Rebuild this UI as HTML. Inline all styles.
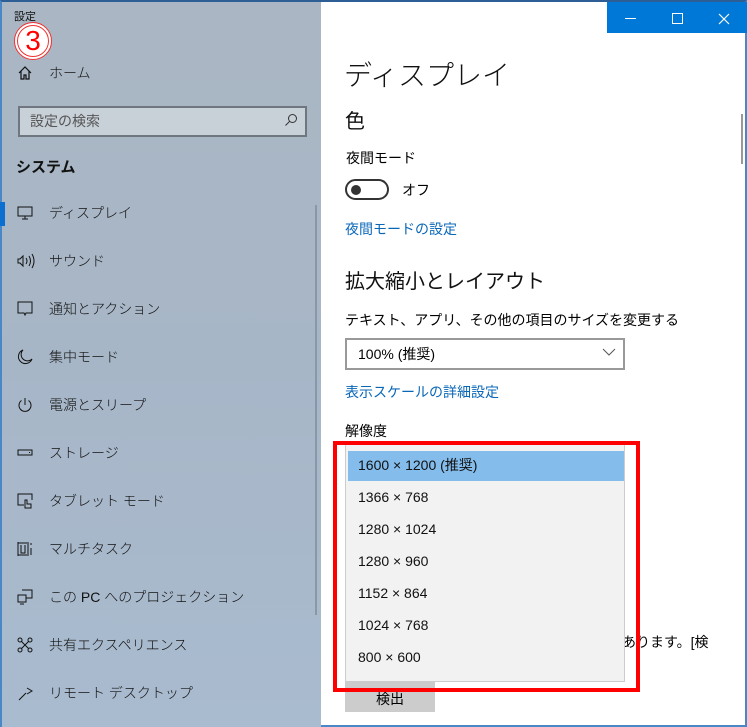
<!DOCTYPE html>
<html><head><meta charset="utf-8"><style>
*{margin:0;padding:0;box-sizing:border-box}
body{width:747px;height:727px;overflow:hidden;position:relative;font-family:"Liberation Sans","Noto Sans CJK JP",sans-serif;color:#000;background:#fff}
.abs{position:absolute;white-space:nowrap}
#side{position:absolute;left:0;top:0;width:321px;height:727px;background:linear-gradient(180deg,#aab6c3 0%,#a7b6c7 50%,#a9bbcf 100%);border-left:2px solid #4a87c7;border-top:2px solid #2d5f96}
#main{position:absolute;left:321px;top:0;width:426px;height:727px;background:#fff;border-top:2px solid #2d5f96;border-right:2px solid #4a87c7;border-bottom:2px solid #4a87c7}
.item{position:absolute;left:47px;font-size:14px;color:#111;line-height:20px;font-weight:300}
.ic{position:absolute;left:15px}
.lnk{color:#0a67b8;font-size:14px}
.opt{position:absolute;left:12px;font-size:14px;line-height:20px;color:#111}
</style></head><body>
<div id="side">
<div class="abs" style="left:12px;top:6px;font-size:11px;color:#111">設定</div>
<div class="abs" style="left:12px;top:20px;width:38px;height:38px;border-radius:50%;background:#fff;border:1px solid #e33"></div>
<div class="abs" style="left:15px;top:23px;width:32px;height:32px;border-radius:50%;border:1px solid #e33;color:#f00;font-size:28px;line-height:30px;text-align:center">3</div>
<svg class="abs" style="left:16px;top:64px" width="14" height="14" viewBox="0 0 14 14"><path d="M1 7L7 1l6 6M3 5v8h3V9h2v4h3V5" fill="none" stroke="#111" stroke-width="1.2"/></svg>
<div class="item" style="top:61px">ホーム</div>
<div class="abs" style="left:16px;top:104px;width:289px;height:31px;border:2px solid #6f7680;background:#c8d0d8"></div>
<div class="abs" style="left:28px;top:109px;font-size:14px;color:#555">設定の検索</div>
<svg class="abs" style="left:282px;top:111px" width="14" height="14" viewBox="0 0 14 14"><circle cx="8.5" cy="5.5" r="4" fill="none" stroke="#333"/><path d="M5.5 8.5L1.5 12.5" stroke="#333"/></svg>
<div class="abs" style="left:14px;top:154px;font-size:15px;font-weight:bold;color:#111">システム</div>
<div class="abs" style="left:-2px;top:200px;width:5px;height:24px;background:#0a6fd0"></div>
<svg class="ic" style="top:204px" width="16" height="14" viewBox="0 0 16 14"><rect x="1" y="1" width="14" height="9" fill="none" stroke="#111"/><path d="M8 10v3M5 13h6" stroke="#111"/></svg>
<div class="item" style="top:201px">ディスプレイ</div>
<svg class="ic" style="top:251px" width="18" height="16" viewBox="0 0 18 16"><path d="M1 6h2l3-3v10l-3-3H1z" fill="none" stroke="#111"/><path d="M9 5q2 3 0 6M12 3q3 5 0 10M15 1q4 7 0 14" fill="none" stroke="#111"/></svg>
<div class="item" style="top:249px">サウンド</div>
<svg class="ic" style="top:299px" width="16" height="16" viewBox="0 0 16 16"><path d="M1 1h14v11H9l-1 2-1-2H1z" fill="none" stroke="#111"/></svg>
<div class="item" style="top:297px">通知とアクション</div>
<svg class="ic" style="top:347px" width="16" height="16" viewBox="0 0 16 16"><path d="M6 1a7 7 0 1 0 9 9A6 6 0 0 1 6 1z" fill="none" stroke="#111"/></svg>
<div class="item" style="top:345px">集中モード</div>
<svg class="ic" style="top:395px" width="16" height="16" viewBox="0 0 16 16"><path d="M4.5 3.5a6 6 0 1 0 7 0M8 1v7" fill="none" stroke="#111"/></svg>
<div class="item" style="top:393px">電源とスリープ</div>
<svg class="ic" style="top:446px" width="16" height="10" viewBox="0 0 16 10"><rect x="1" y="2" width="14" height="5" fill="none" stroke="#111"/><path d="M12 4.5h1" stroke="#111"/></svg>
<div class="item" style="top:441px">ストレージ</div>
<svg class="ic" style="top:491px" width="16" height="16" viewBox="0 0 16 16"><path d="M7 12H1V1h14v6M8 15V7l2 0v4h4v4z" fill="none" stroke="#111"/></svg>
<div class="item" style="top:489px">タブレット モード</div>
<svg class="ic" style="top:539px" width="16" height="16" viewBox="0 0 16 16"><path d="M1 1v14M1 2h9M1 14h9M11 1v14M4 4v8h4V4M14 2v2M14 7v7" fill="none" stroke="#111"/></svg>
<div class="item" style="top:537px">マルチタスク</div>
<svg class="ic" style="top:587px" width="16" height="16" viewBox="0 0 16 16"><path d="M5 1h10v8H9M1 6h8v7H1zM3 15h4" fill="none" stroke="#111"/></svg>
<div class="item" style="top:585px">この PC へのプロジェクション</div>
<svg class="ic" style="top:635px" width="16" height="16" viewBox="0 0 16 16"><circle cx="3" cy="3" r="2" fill="none" stroke="#111"/><circle cx="13" cy="3" r="2" fill="none" stroke="#111"/><circle cx="3" cy="13" r="2" fill="none" stroke="#111"/><circle cx="13" cy="13" r="2" fill="none" stroke="#111"/><path d="M4.5 4.5l7 7M11.5 4.5l-7 7" stroke="#111"/></svg>
<div class="item" style="top:633px">共有エクスペリエンス</div>
<svg class="ic" style="top:683px" width="16" height="16" viewBox="0 0 16 16"><path d="M2 15L9 8M10 3l5 3-5 3" fill="none" stroke="#111"/></svg>
<div class="item" style="top:681px">リモート デスクトップ</div>
<div class="abs" style="left:313px;top:203px;width:2px;height:410px;background:#8a97a6"></div>
</div>
<div id="main">
<div class="abs" style="left:286px;top:0;width:140px;height:31px;background:#0078d7"></div>
<div class="abs" style="left:304px;top:16px;width:11px;height:1px;background:#fff"></div>
<div class="abs" style="left:351px;top:11px;width:11px;height:11px;border:1px solid #fff"></div>
<svg class="abs" style="left:397px;top:11px" width="12" height="12"><path d="M1 1l10 10M11 1L1 11" stroke="#fff" stroke-width="1.2"/></svg>
<div class="abs" style="left:23px;top:52px;font-size:28px;font-weight:300;color:#111">ディスプレイ</div>
<div class="abs" style="left:24px;top:103px;font-size:20px;color:#111">色</div>
<div class="abs" style="left:25px;top:146px;font-size:14px">夜間モード</div>
<div class="abs" style="left:24px;top:177px;width:44px;height:21px;border:2px solid #333;border-radius:11px"></div>
<div class="abs" style="left:30px;top:183px;width:10px;height:10px;border-radius:50%;background:#333"></div>
<div class="abs" style="left:81px;top:178px;font-size:14px">オフ</div>
<div class="abs lnk" style="left:24px;top:217px">夜間モードの設定</div>
<div class="abs" style="left:24px;top:263px;font-size:20px;color:#111">拡大縮小とレイアウト</div>
<div class="abs" style="left:24px;top:308px;font-size:14px">テキスト、アプリ、その他の項目のサイズを変更する</div>
<div class="abs" style="left:24px;top:336px;width:280px;height:32px;border:2px solid #999"></div>
<div class="abs" style="left:37px;top:342px;font-size:14px">100% (推奨)</div>
<svg class="abs" style="left:281px;top:346px" width="14" height="9"><path d="M1 1l6 6 6-6" fill="none" stroke="#555"/></svg>
<div class="abs lnk" style="left:24px;top:380px">表示スケールの詳細設定</div>
<div class="abs" style="left:24px;top:419px;font-size:14px">解像度</div>
<div class="abs" style="left:287px;top:630px;font-size:14px">があります。[検</div>
<div class="abs" style="left:24px;top:679px;width:90px;height:31px;background:#ccc;text-align:center;font-size:14px;line-height:31px;padding-top:3px">検出</div>
<div class="abs" style="left:24px;top:442px;width:280px;height:238px;background:#f2f2f2;border:1px solid #ccc">
<div class="abs" style="left:2px;top:6px;width:276px;height:30px;background:#84bdec"></div>
<div class="opt" style="top:10px">1600 × 1200 (推奨)</div>
<div class="opt" style="top:42px">1366 × 768</div>
<div class="opt" style="top:74px">1280 × 1024</div>
<div class="opt" style="top:106px">1280 × 960</div>
<div class="opt" style="top:138px">1152 × 864</div>
<div class="opt" style="top:170px">1024 × 768</div>
<div class="opt" style="top:202px">800 × 600</div>
</div>
<div class="abs" style="left:12px;top:439px;width:307px;height:251px;border:4px solid #f00"></div>
<div class="abs" style="left:420px;top:112px;width:2px;height:50px;background:#999"></div>
</div>
</body></html>
